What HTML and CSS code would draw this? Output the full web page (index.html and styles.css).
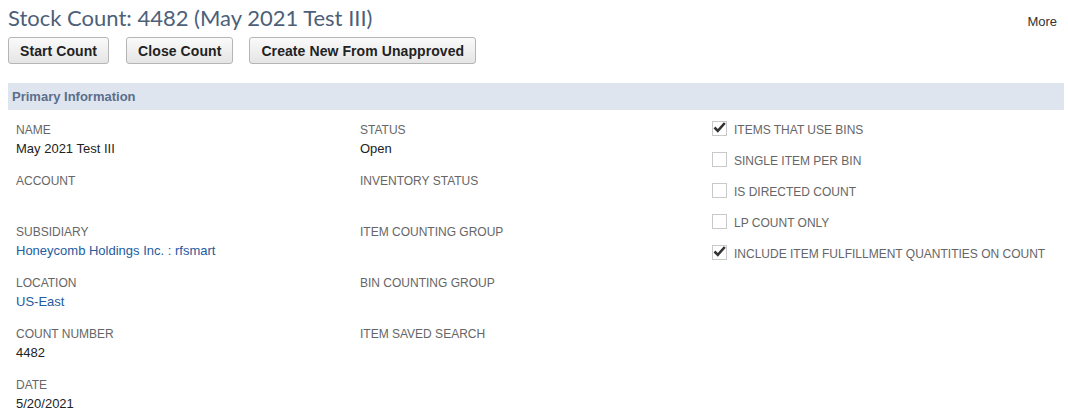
FILE: index.html
```html
<!DOCTYPE html>
<html>
<head>
<meta charset="utf-8">
<link rel="stylesheet" href="styles.css">
</head>
<body>
<div class="page">
  <div class="topline">
    <h1 class="title">Stock Count: 4482 (May 2021 Test III)</h1>
    <a class="more">More</a>
  </div>
  <div class="buttons">
    <button class="btn">Start Count</button>
    <button class="btn">Close Count</button>
    <button class="btn">Create New From Unapproved</button>
  </div>
  <div class="section-bar">Primary Information</div>
  <div class="fields">
    <div class="col col1">
      <div class="field"><div class="label">NAME</div><div class="value">May 2021 Test III</div></div>
      <div class="field"><div class="label">ACCOUNT</div><div class="value"></div></div>
      <div class="field"><div class="label">SUBSIDIARY</div><div class="value link">Honeycomb Holdings Inc. : rfsmart</div></div>
      <div class="field"><div class="label">LOCATION</div><div class="value link">US-East</div></div>
      <div class="field"><div class="label">COUNT NUMBER</div><div class="value">4482</div></div>
      <div class="field"><div class="label">DATE</div><div class="value">5/20/2021</div></div>
    </div>
    <div class="col col2">
      <div class="field"><div class="label">STATUS</div><div class="value">Open</div></div>
      <div class="field"><div class="label">INVENTORY STATUS</div><div class="value"></div></div>
      <div class="field"><div class="label">ITEM COUNTING GROUP</div><div class="value"></div></div>
      <div class="field"><div class="label">BIN COUNTING GROUP</div><div class="value"></div></div>
      <div class="field"><div class="label">ITEM SAVED SEARCH</div><div class="value"></div></div>
    </div>
    <div class="col col3">
      <div class="check"><span class="box checked"><svg viewBox="0 0 15 15" width="15" height="15"><path d="M2.5 7.5 L5.8 10.8 L12.8 3" fill="none" stroke="#333" stroke-width="2.6"/></svg></span><span class="clabel">ITEMS THAT USE BINS</span></div>
      <div class="check"><span class="box"></span><span class="clabel">SINGLE ITEM PER BIN</span></div>
      <div class="check"><span class="box"></span><span class="clabel">IS DIRECTED COUNT</span></div>
      <div class="check"><span class="box"></span><span class="clabel">LP COUNT ONLY</span></div>
      <div class="check"><span class="box checked"><svg viewBox="0 0 15 15" width="15" height="15"><path d="M2.5 7.5 L5.8 10.8 L12.8 3" fill="none" stroke="#333" stroke-width="2.6"/></svg></span><span class="clabel">INCLUDE ITEM FULFILLMENT QUANTITIES ON COUNT</span></div>
    </div>
  </div>
</div>
</body>
</html>
```

FILE: styles.css
```css
html, body {
  margin: 0;
  padding: 0;
  background: #fff;
}
.page {
  padding: 4px 4px 0 8px;
  font-family: "Liberation Sans", Arial, sans-serif;
}
.topline {
  display: flex;
  justify-content: space-between;
  align-items: flex-start;
  height: 30px;
}
.title {
  margin: 0;
  font-family: Lato, sans-serif;
  font-weight: normal;
  font-size: 22px;
  line-height: 28px;
  color: #4d5f79;
}
.more {
  font-size: 13px;
  color: #333;
  line-height: 16px;
  margin-top: 10px;
  margin-right: 7px;
}
.buttons {
  display: flex;
  gap: 17px;
  margin-top: 3px;
}
.btn {
  height: 27px;
  padding: 0 11px;
  font-family: "Liberation Sans", Arial, sans-serif;
  font-weight: bold;
  font-size: 14px;
  letter-spacing: 0.08px;
  color: #222;
  background: linear-gradient(#fafafa, #e5e5e5);
  border: 1px solid #b5b5b5;
  border-radius: 3px;
}
.btn:nth-child(3) { margin-left: -1px; }
.section-bar {
  margin-top: 19px;
  height: 27px;
  line-height: 27px;
  background: #dfe5ee;
  color: #5b6e8c;
  font-weight: bold;
  font-size: 13px;
  padding-left: 4px;
}
.fields {
  display: flex;
  padding-left: 8px;
  padding-top: 12px;
}
.col1 { width: 344px; }
.col2 { width: 352px; }
.col3 { flex: 1; }
.field {
  height: 51px;
}
.label {
  font-size: 12px;
  line-height: 16px;
  color: #666;
}
.value {
  font-size: 13px;
  line-height: 18px;
  color: #222;
  margin-top: 2px;
  min-height: 18px;
}
.value.link { color: #255ba0; }
.check {
  display: flex;
  align-items: center;
  height: 31px;
  margin-top: -9px;
  margin-bottom: 9px;
}
.box {
  width: 15px;
  height: 15px;
  box-sizing: border-box;
  border: 1px solid #c9c9c9;
  background: #fff;
  display: inline-block;
  position: relative;
  flex: none;
}
.box svg {
  position: absolute;
  left: -1px;
  top: -2px;
}
.clabel {
  margin-left: 7px;
  font-size: 12px;
  color: #666;
  line-height: 16px;
  margin-top: 2px;
}
```
